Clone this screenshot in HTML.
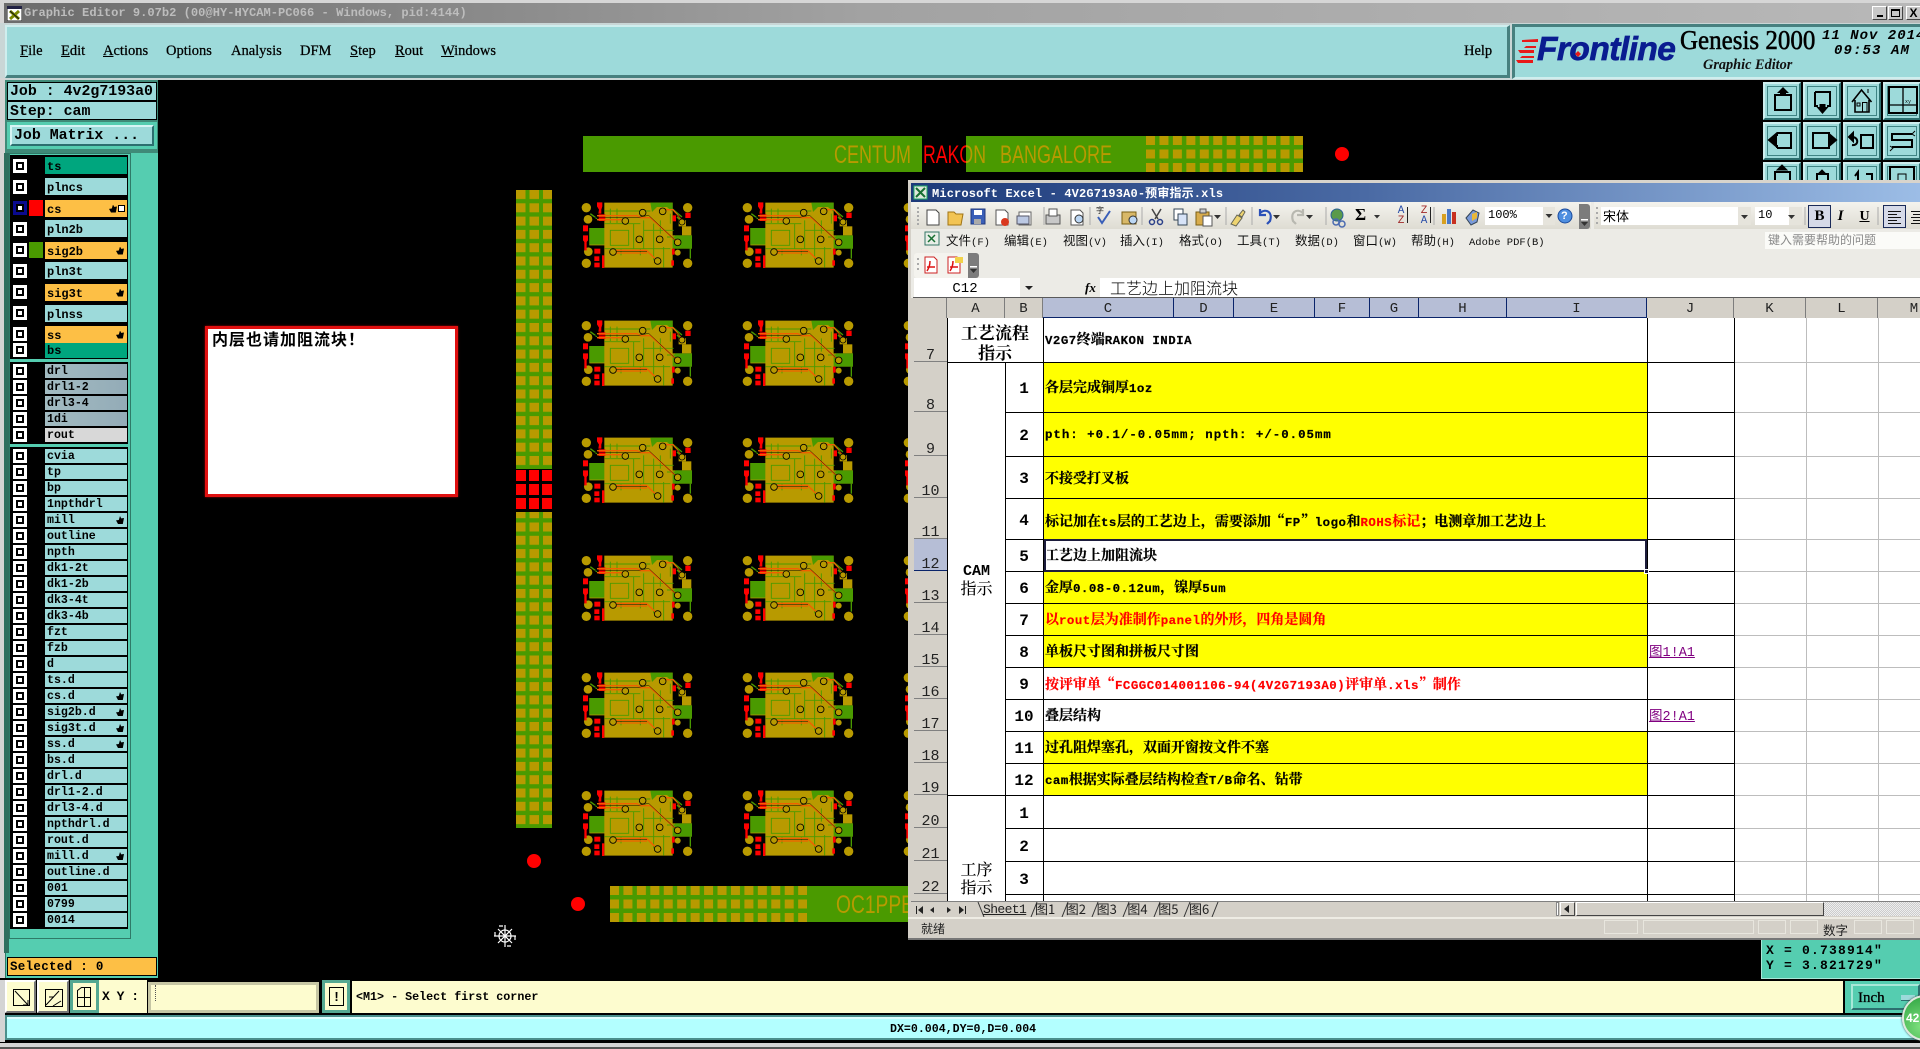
<!DOCTYPE html>
<html lang="zh">
<head>
<meta charset="utf-8">
<title>Graphic Editor</title>
<style>
html,body{margin:0;padding:0;background:#000;width:1920px;height:1049px;overflow:hidden}
div,span{box-sizing:border-box}
.a{position:absolute;white-space:nowrap}
body{font-family:"Liberation Mono","Noto Serif CJK SC",monospace;color:#000}
.mn{top:42px;font:14.5px/18px "Liberation Serif",serif;-webkit-text-stroke:.25px #000}
.r{position:absolute;left:45px;width:82px;font:bold 11.6px/16px "Liberation Mono",monospace;padding-left:2px;background:#9ddada;height:14px}
.g1{height:17px;line-height:20px;font-size:12px}
.o{background:#fdbf45}.t{background:#00a67e}.y{background:linear-gradient(90deg,#a3bcc2,#93abb7)}.w{background:#d8d8d8}
.c{position:absolute;left:13px;width:14px;height:14px;background:#fff}
.c::after{content:"";position:absolute;left:3px;top:3px;width:8px;height:8px;border:2px solid #000;background:#fff;box-sizing:border-box}
.h{position:absolute;right:3px;top:50%;margin-top:-4px;width:8px;height:8px;background:#000;clip-path:polygon(50% 0,65% 30%,100% 25%,85% 100%,25% 100%,0 55%,35% 50%)}
.ch{top:298px;height:20px;border-right:1px solid #7d7d7d;text-align:center;font:14px/23px "Liberation Mono",monospace;background:#d4d0c8;color:#222;overflow:hidden}
.cs{background:#b6bed6;border-right:1px solid #0a246a;border-bottom:1px solid #0a246a}
.rh{left:914px;width:33px;background:#d4d0c8;border-bottom:1px solid #808080;font:15px/10px "Liberation Mono",monospace;text-align:center;display:flex;align-items:flex-end;justify-content:center;color:#222}
.yl{left:1044px;width:603px;background:#ff0}
.tx{left:1045px;font:bold 14px/18px "Liberation Mono","Noto Serif CJK SC",monospace;color:#000;-webkit-text-stroke:.2px currentColor}
.tx i{font-style:normal;font-size:12.4px;letter-spacing:.5px}
.tx b{font-family:"Noto Serif CJK SC",serif;font-weight:bold}
.red{color:#f00}
.n{left:1005px;width:38px;text-align:center;font:bold 16px/18px "Liberation Mono",monospace}
.me{top:232px;font:12.5px/16px "Noto Sans CJK SC","Liberation Mono",sans-serif;color:#111}
.me i{font-style:normal;font-family:"Liberation Mono",monospace;font-size:10.5px}
.lnk{left:1649px;color:#800080;font:13.5px/16px "Liberation Mono","Noto Sans CJK SC",monospace;text-decoration:underline}
.btn{width:40px;height:40px;background:#9ddada;border:3px solid;border-color:#cdeeee #2c6f6f #2c6f6f #cdeeee;outline:1px solid #000;outline-offset:-1px}
.btn::after{content:"";position:absolute;left:2px;top:2px;right:2px;bottom:2px;border:1px solid #3f8484}
</style>
</head>
<body>

<!-- Title -->
<div class="a" style="left:0;top:0;width:1920px;height:25px;background:#d6d6d6"></div>
<div class="a" style="left:4px;top:3px;width:1916px;height:20px;background:linear-gradient(90deg,#6c6c6c,#a2a2a2 45%,#b8b8b8)"></div>
<svg class="a" style="left:7px;top:6px" width="15" height="15" viewBox="0 0 15 15"><rect width="15" height="15" fill="#fff" stroke="#222"/><rect width="15" height="3" fill="#224"/><path d="M3 5l9 8M12 5l-9 8" stroke="#7a8a00" stroke-width="3"/><path d="M3 5l9 8" stroke="#111" stroke-width="1"/></svg>
<div class="a" style="left:24px;top:6px;font:bold 12.1px/15px 'Liberation Mono',monospace;color:#bdbdbd">Graphic Editor 9.07b2 (00@HY-HYCAM-PC066 - Windows, pid:4144)</div>
<div class="a" style="left:1872px;top:6px;width:15px;height:14px;background:#c8c8c8;border:1px solid;border-color:#fff #444 #444 #fff"><div class="a" style="left:4px;top:8px;width:6px;height:2px;background:#000"></div></div>
<div class="a" style="left:1888px;top:6px;width:15px;height:14px;background:#c8c8c8;border:1px solid;border-color:#fff #444 #444 #fff"><div class="a" style="left:2px;top:2px;width:9px;height:8px;border:1px solid #000;border-top-width:2px"></div></div>
<div class="a" style="left:1906px;top:6px;width:15px;height:14px;background:#c8c8c8;border:1px solid;border-color:#fff #444 #444 #fff;font:bold 12px/12px 'Liberation Sans',sans-serif;text-align:center">X</div>

<!-- Menu -->
<div class="a" style="left:0;top:23px;width:1920px;height:57px;background:#c9d6d6"></div>
<div class="a" style="left:5px;top:25px;width:1505px;height:53px;background:#9ddada;border-bottom:3px solid #47807f;border-right:3px solid #47807f;border-top:2px solid #cfeeee;border-left:2px solid #cfeeee"></div>
<div class="a mn" style="left:20px"><u>F</u>ile</div>
<div class="a mn" style="left:61px"><u>E</u>dit</div>
<div class="a mn" style="left:103px"><u>A</u>ctions</div>
<div class="a mn" style="left:166px">Options</div>
<div class="a mn" style="left:231px">Analysis</div>
<div class="a mn" style="left:300px">DFM</div>
<div class="a mn" style="left:350px"><u>S</u>tep</div>
<div class="a mn" style="left:395px"><u>R</u>out</div>
<div class="a mn" style="left:441px"><u>W</u>indows</div>
<div class="a mn" style="left:1464px">Help</div>

<div class="a" style="left:1512px;top:24px;width:408px;height:55px;background:#9ddada;border-top:3px solid #47807f;border-left:3px solid #47807f;border-bottom:2px solid #cfeeee"></div>
<svg class="a" style="left:1516px;top:38px" width="24" height="26" viewBox="0 0 24 26"><path d="M6 2L22 1V4L6 4zM10 8H20V10H8zM2 12L18 12V15H4zM6 18H18V20H4zM0 22H17V25H2z" fill="#e81818"/></svg>
<div class="a" style="left:1537px;top:31px;font:italic bold 33.500px/38px 'Liberation Sans',sans-serif;color:#0a1c90;letter-spacing:-.55px;-webkit-text-stroke:.7px #0a1c90">Frontline</div>
<svg class="a" style="left:1568px;top:44px" width="20" height="20" viewBox="0 0 20 20"><path d="M10 7l3 3-3 3-3-3z" fill="#e81818"/></svg>
<div class="a" style="left:1680px;top:25px;font:25px/30px 'Liberation Serif',serif;color:#000;-webkit-text-stroke:.5px #000;transform:scaleY(1.1);transform-origin:top left">Genesis 2000</div>
<div class="a" style="left:1703px;top:57px;font:italic bold 14.300px/17px 'Liberation Serif',serif;color:#111">Graphic Editor</div>
<div class="a" style="left:1822px;top:28px;font:italic bold 14px/16px 'Liberation Mono',monospace;letter-spacing:1px">11 Nov 2014</div>
<div class="a" style="left:1834px;top:43px;font:italic bold 14px/16px 'Liberation Mono',monospace;letter-spacing:1.1px">09:53 AM</div>

<!-- Left panel -->
<div class="a" style="left:0;top:78px;width:5px;height:960px;background:#d4d4d4"></div>
<div class="a" style="left:5px;top:80px;width:153px;height:898px;background:#55cdb0;border-left:1px solid #2f7a68"></div>
<div class="a" style="left:5px;top:80px;width:153px;height:73px;background:#3f8a78"></div>
<div class="a" style="left:4px;top:153px;width:5px;height:800px;background:#2f6f5f"></div>
<div class="a" style="left:7px;top:82px;width:150px;height:19px;background:#9ddada;border:1px solid #000;font:bold 14.9px/19px 'Liberation Mono',monospace;padding-left:2px">Job : 4v2g7193a0</div>
<div class="a" style="left:7px;top:101px;width:150px;height:19px;background:#9ddada;border:1px solid #000;font:bold 14.9px/20px 'Liberation Mono',monospace;padding-left:2px">Step: cam</div>
<div class="a" style="left:7px;top:122px;width:150px;height:27px;background:#55cdb0"></div>
<div class="a" style="left:10px;top:125px;width:144px;height:21px;background:#9ddada;border:2px solid;border-color:#d6f5f5 #2c6f6f #2c6f6f #d6f5f5;font:bold 14.9px/19px 'Liberation Mono',monospace;padding-left:2px">Job Matrix ...</div>

<div class="a" style="left:9px;top:153px;width:122px;height:786px;background:#55cdb0;border:1px solid #2f7a68"></div>
<div class="a" style="left:10px;top:155px;width:118px;height:204px;background:#000"></div>
<div class="a" style="left:10px;top:362px;width:118px;height:82px;background:#000"></div>
<div class="a" style="left:10px;top:447px;width:118px;height:482px;background:#000"></div>

<!-- group 1 -->
<div class="c" style="top:159px"></div><div class="r g1 t" style="top:157px">ts</div>
<div class="c" style="top:180px"></div><div class="r g1" style="top:178px">plncs</div>
<div class="c" style="top:201px;background:#0a0a90"></div><div class="a" style="left:29px;top:200px;width:14px;height:16px;background:#f00"></div><div class="r g1 o" style="top:200px">cs<span class="h" style="right:10px"></span><span class="a" style="right:2px;top:5px;width:7px;height:7px;border:1px solid #000;background:#fff"></span></div>
<div class="c" style="top:222px"></div><div class="r g1" style="top:220px">pln2b</div>
<div class="c" style="top:243px"></div><div class="a" style="left:29px;top:242px;width:14px;height:16px;background:#4a9a00"></div><div class="r g1 o" style="top:242px">sig2b<span class="h"></span></div>
<div class="c" style="top:264px"></div><div class="r g1" style="top:262px">pln3t</div>
<div class="c" style="top:285px"></div><div class="r g1 o" style="top:284px">sig3t<span class="h"></span></div>
<div class="c" style="top:306px"></div><div class="r g1" style="top:305px">plnss</div>
<div class="c" style="top:327px"></div><div class="r g1 o" style="top:326px">ss<span class="h"></span></div>
<div class="c" style="top:343px"></div><div class="r g1 t" style="top:343px;height:15px;line-height:16px">bs</div>

<!-- group 2 -->
<div class="c" style="top:364px"></div><div class="r y" style="top:364px">drl</div>
<div class="c" style="top:380px"></div><div class="r y" style="top:380px">drl1-2</div>
<div class="c" style="top:396px"></div><div class="r y" style="top:396px">drl3-4</div>
<div class="c" style="top:412px"></div><div class="r y" style="top:412px">1di</div>
<div class="c" style="top:428px"></div><div class="r w" style="top:428px">rout</div>

<!-- group 3 -->
<div class="c" style="top:449px"></div><div class="r" style="top:449px">cvia</div>
<div class="c" style="top:465px"></div><div class="r" style="top:465px">tp</div>
<div class="c" style="top:481px"></div><div class="r" style="top:481px">bp</div>
<div class="c" style="top:497px"></div><div class="r" style="top:497px">1npthdrl</div>
<div class="c" style="top:513px"></div><div class="r" style="top:513px">mill<span class="h"></span></div>
<div class="c" style="top:529px"></div><div class="r" style="top:529px">outline</div>
<div class="c" style="top:545px"></div><div class="r" style="top:545px">npth</div>
<div class="c" style="top:561px"></div><div class="r" style="top:561px">dk1-2t</div>
<div class="c" style="top:577px"></div><div class="r" style="top:577px">dk1-2b</div>
<div class="c" style="top:593px"></div><div class="r" style="top:593px">dk3-4t</div>
<div class="c" style="top:609px"></div><div class="r" style="top:609px">dk3-4b</div>
<div class="c" style="top:625px"></div><div class="r" style="top:625px">fzt</div>
<div class="c" style="top:641px"></div><div class="r" style="top:641px">fzb</div>
<div class="c" style="top:657px"></div><div class="r" style="top:657px">d</div>
<div class="c" style="top:673px"></div><div class="r" style="top:673px">ts.d</div>
<div class="c" style="top:689px"></div><div class="r" style="top:689px">cs.d<span class="h"></span></div>
<div class="c" style="top:705px"></div><div class="r" style="top:705px">sig2b.d<span class="h"></span></div>
<div class="c" style="top:721px"></div><div class="r" style="top:721px">sig3t.d<span class="h"></span></div>
<div class="c" style="top:737px"></div><div class="r" style="top:737px">ss.d<span class="h"></span></div>
<div class="c" style="top:753px"></div><div class="r" style="top:753px">bs.d</div>
<div class="c" style="top:769px"></div><div class="r" style="top:769px">drl.d</div>
<div class="c" style="top:785px"></div><div class="r" style="top:785px">drl1-2.d</div>
<div class="c" style="top:801px"></div><div class="r" style="top:801px">drl3-4.d</div>
<div class="c" style="top:817px"></div><div class="r" style="top:817px">npthdrl.d</div>
<div class="c" style="top:833px"></div><div class="r" style="top:833px">rout.d</div>
<div class="c" style="top:849px"></div><div class="r" style="top:849px">mill.d<span class="h"></span></div>
<div class="c" style="top:865px"></div><div class="r" style="top:865px">outline.d</div>
<div class="c" style="top:881px"></div><div class="r" style="top:881px">001</div>
<div class="c" style="top:897px"></div><div class="r" style="top:897px">0799</div>
<div class="c" style="top:913px"></div><div class="r" style="top:913px">0014</div>

<div class="a" style="left:7px;top:957px;width:150px;height:19px;background:#fdbf45;border:1px solid #000;font:bold 12.500px/19px 'Liberation Mono',monospace;padding-left:2px;letter-spacing:.3px">Selected : 0</div>

<!-- Canvas -->
<svg class="a" style="left:0;top:0" width="1920" height="1049" viewBox="0 0 1920 1049">
<defs>
<pattern id="pv" patternUnits="userSpaceOnUse" x="516" y="190" width="13.5" height="13.3"><rect width="13.5" height="13.3" fill="#4a9a00"/><rect width="9.5" height="9" fill="#b89a00"/></pattern>
<pattern id="pt" patternUnits="userSpaceOnUse" x="1146" y="136" width="13.45" height="13.5"><rect width="13.45" height="13.5" fill="#4a9a00"/><rect width="9" height="9" fill="#b89a00"/></pattern>
<pattern id="pb" patternUnits="userSpaceOnUse" x="610" y="886" width="13.44" height="13.5"><rect width="13.44" height="13.5" fill="#4a9a00"/><rect width="9" height="9" fill="#b89a00"/></pattern>
<clipPath id="cr"><rect x="920" y="136" width="46" height="36"/></clipPath>
<clipPath id="cg"><rect x="966" y="136" width="30" height="36"/></clipPath>
<g id="pcb" transform="scale(.3333) translate(-245,-65)">
 <path d="M312 67H517V165H575V205H517V262H312V195H267V143H312Z" fill="#b89a00"/>
 <path d="M525 165H575V205H517V175ZM267 143H312V193H267ZM450 67H517V95L500 80H470L455 95Z" fill="#4a9a00"/>
 <path d="M312 92H450M330 85V128M350 85V128M312 130H420M400 130V205M312 205H510M330 150V195H385V150ZM430 120V205M460 130V240M490 200V262M430 150H520M480 120V160M510 100V130M362 205V225M420 205V225M500 170H540" fill="none" stroke="#4a9a00" stroke-width="2.800"/>
 <path d="M270 100L290 115M530 110L545 125M515 85L545 110M570 205V235" stroke="#4a9a00" stroke-width="4" fill="none"/>
 <circle cx="258" cy="82" r="14" fill="#b89a00"/><circle cx="263" cy="117" r="13" fill="#b89a00"/><circle cx="562" cy="82" r="14" fill="#b89a00"/><circle cx="264" cy="214" r="13" fill="#b89a00"/><circle cx="258" cy="249" r="14" fill="#b89a00"/><circle cx="562" cy="249" r="14" fill="#b89a00"/><circle cx="532" cy="217" r="9" fill="#b89a00"/><rect x="535" y="120" width="22" height="18" fill="#b89a00"/><rect x="545" y="138" width="28" height="27" fill="#b89a00"/>
 <g fill="#f00"><path d="M290 66h16v12l-3 10v12h-9l2-12-6-10z"/><rect x="555" y="97" width="16" height="16"/><rect x="248" y="135" width="15" height="18"/><path d="M248 165h15v15l-4 5v25h-7v-25l-4-5z"/><rect x="282" y="205" width="18" height="15"/><rect x="282" y="228" width="15" height="14"/><rect x="282" y="247" width="16" height="14"/><rect x="305" y="225" width="7" height="38"/><rect x="295" y="102" width="20" height="20"/><rect x="515" y="205" width="8" height="18"/><rect x="513" y="240" width="8" height="16"/><rect x="517" y="105" width="10" height="18"/></g>
 <path d="M290 106H410L420 112H450L532 186M290 118H378M345 210H438L470 240M338 218H440M490 88H518L546 122" fill="none" stroke="#f06000" stroke-width="4"/>
 <path d="M280 112H410L445 105L530 185M520 95L548 120M340 214H440" fill="none" stroke="#000" stroke-width="1.4"/>
 <g fill="#b89a00" stroke="#000" stroke-width="2.5"><circle cx="427" cy="97" r="10"/><circle cx="375" cy="122" r="10"/><circle cx="487" cy="93" r="10"/><circle cx="545" cy="125" r="9"/><circle cx="532" cy="186" r="10"/><circle cx="417" cy="177" r="10"/><circle cx="478" cy="177" r="10"/><circle cx="338" cy="215" r="10"/><circle cx="472" cy="242" r="10"/></g>
</g>
</defs>
<rect x="583" y="136" width="339" height="36" fill="#4a9a00"/>
<rect x="966" y="136" width="180" height="36" fill="#4a9a00"/>
<rect x="1146" y="136" width="157" height="36" fill="url(#pt)"/>
<text x="834" y="163" font-family="Liberation Sans" font-size="25" fill="#b89a00" textLength="77" lengthAdjust="spacingAndGlyphs">CENTUM</text>
<text x="923" y="163" font-family="Liberation Sans" font-size="25" fill="#f00" textLength="63" lengthAdjust="spacingAndGlyphs" clip-path="url(#cr)">RAKON</text>
<text x="923" y="163" font-family="Liberation Sans" font-size="25" fill="#b89a00" textLength="63" lengthAdjust="spacingAndGlyphs" clip-path="url(#cg)">RAKON</text>
<text x="1000" y="163" font-family="Liberation Sans" font-size="25" fill="#b89a00" textLength="112" lengthAdjust="spacingAndGlyphs">BANGALORE</text>
<circle cx="1342" cy="154" r="7" fill="#f00"/>
<rect x="516" y="190" width="36" height="279" fill="url(#pv)"/>
<rect x="516" y="512" width="36" height="316" fill="url(#pv)"/>
<g fill="#f00"><rect x="516" y="470" width="10" height="11"/><rect x="529" y="470" width="10" height="11"/><rect x="542" y="470" width="10" height="11"/><rect x="516" y="484" width="10" height="11"/><rect x="529" y="484" width="10" height="11"/><rect x="542" y="484" width="10" height="11"/><rect x="516" y="498" width="10" height="11"/><rect x="529" y="498" width="10" height="11"/><rect x="542" y="498" width="10" height="11"/></g>
<use href="#pcb" x="582" y="202"/><use href="#pcb" x="743" y="202"/><use href="#pcb" x="904" y="202"/>
<use href="#pcb" x="582" y="320"/><use href="#pcb" x="743" y="320"/><use href="#pcb" x="904" y="320"/>
<use href="#pcb" x="582" y="437"/><use href="#pcb" x="743" y="437"/><use href="#pcb" x="904" y="437"/>
<use href="#pcb" x="582" y="555"/><use href="#pcb" x="743" y="555"/><use href="#pcb" x="904" y="555"/>
<use href="#pcb" x="582" y="672"/><use href="#pcb" x="743" y="672"/><use href="#pcb" x="904" y="672"/>
<use href="#pcb" x="582" y="790"/><use href="#pcb" x="743" y="790"/><use href="#pcb" x="904" y="790"/>
<circle cx="534" cy="861" r="7" fill="#f00"/><circle cx="578" cy="904" r="7" fill="#f00"/>
<rect x="610" y="886" width="300" height="36" fill="#4a9a00"/>
<rect x="610" y="886" width="197" height="36" fill="url(#pb)"/>
<text x="836" y="913" font-family="Liberation Sans" font-size="25" fill="#b89a00" textLength="78" lengthAdjust="spacingAndGlyphs">OC1PPB</text>
<g stroke="#fff" stroke-width="1.2" fill="none"><path d="M505 925V947M494 936H516M498 929L512 943M512 929L498 943"/><circle cx="505" cy="936" r="6"/><path d="M499 926h4M507 946h4M495 932v4M515 936v4" /></g>
</svg>

<!-- Note -->
<div class="a" style="left:205px;top:326px;width:253px;height:171px;background:#fff;border:3px solid #e01010;box-shadow:0 0 2px #a00"></div>
<div class="a" style="left:212px;top:328px;font:bold 16px/20px 'Noto Sans CJK SC','Liberation Sans',sans-serif;color:#000;letter-spacing:1px">内层也请加阻流块！</div>

<!-- Right toolbar -->
<div class="a btn" style="left:1762px;top:81px"></div><div class="a btn" style="left:1802px;top:81px"></div><div class="a btn" style="left:1842px;top:81px"></div><div class="a btn" style="left:1882px;top:81px"></div>
<div class="a btn" style="left:1762px;top:121px"></div><div class="a btn" style="left:1802px;top:121px"></div><div class="a btn" style="left:1842px;top:121px"></div><div class="a btn" style="left:1882px;top:121px"></div>
<div class="a btn" style="left:1762px;top:161px"></div><div class="a btn" style="left:1802px;top:161px"></div><div class="a btn" style="left:1842px;top:161px"></div><div class="a btn" style="left:1882px;top:161px"></div>
<svg class="a" style="left:0;top:0" width="1920" height="180" viewBox="0 0 1920 180" fill="none" stroke="#000" stroke-width="2">
<path d="M1775 95h16v15h-16z"/><path d="M1783 87l-6 6h3v3h6v-3h3z" fill="#000" stroke="none"/>
<path d="M1815 92h15v14h-3M1818 106h-3V92"/><path d="M1822.500 114l-6-7h3v-3h6v3h3z" fill="#000" stroke="none"/>
<path d="M1852 102l9.500-12 10 12M1855 100v12h14v-12" stroke-width="1.600"/><rect x="1857" y="103" width="3" height="3" stroke-width="1"/><rect x="1862.500" y="102.500" width="4.500" height="9.500" stroke-width="1"/><path d="M1868 93v-4" stroke-width="1"/>
<rect x="1889" y="87" width="28" height="26" stroke-width="2"/><path d="M1889 105h28M1903 87v26" stroke-width="1.300"/>
<text x="1905" y="103" font-size="5" font-family="Liberation Mono" fill="#000" stroke="none">xy</text>
<path d="M1777 133h14v15h-14M1777 133v3M1777 148v-3"/><path d="M1769 140l7-6v12z" fill="#000"/>
<path d="M1813 133h16v15h-16z"/><path d="M1836 140l-7-6v12z" fill="#000"/>
<path d="M1852 145c7 1 7-8 0-8"/><path d="M1849 137l4-4v8z" fill="#000"/><rect x="1861" y="135" width="12" height="13"/>
<path d="M1912 134h-20v6h20v7h-20" stroke-width="2"/><path d="M1915 131l-3 3 3 2M1890 146l3 2-3 3" stroke-width="1"/>
<rect x="1775" y="172" width="15" height="10"/><path d="M1782 165l-5 5h10z" fill="#000" stroke-width="1"/>
<rect x="1817" y="174" width="11" height="8"/><path d="M1822 170l-4 4h8z" fill="#000" stroke-width="1"/>
<path d="M1855 176l3-4v10M1866 174h6v8"/>
<rect x="1890" y="167" width="24" height="16"/><rect x="1898" y="174" width="8" height="8" stroke-width="1"/>
</svg>

<!-- Excel -->
<div class="a" style="left:908px;top:180px;width:1012px;height:760px;background:#d4d0c8;overflow:hidden">
</div>
<div class="a" style="left:908px;top:180px;width:1012px;height:3px;background:#d8d4cc"></div>
<div class="a" style="left:911px;top:183px;width:1009px;height:19px;background:linear-gradient(90deg,#1d3a7a,#4a6aa4 45%,#9cbde6)"></div>
<svg class="a" style="left:913px;top:185px" width="15" height="15" viewBox="0 0 15 15"><rect x="1" y="1" width="13" height="13" fill="#dfe8dd" stroke="#2a6"/><path d="M3 3l9 9M12 3l-9 9" stroke="#176f32" stroke-width="2"/></svg>
<div class="a" style="left:932px;top:185px;font:bold 12px/19px 'Liberation Mono','Noto Sans CJK SC',monospace;color:#fff;letter-spacing:.15px">Microsoft Excel - 4V2G7193A0-预审指示.xls</div>

<div class="a" style="left:911px;top:202px;width:1009px;height:76px;background:#ecebe6"></div>
<div class="a" style="left:911px;top:202px;width:680px;height:27px;background:linear-gradient(#f4f3ee,#dedcd3)"></div>
<div class="a" style="left:1594px;top:202px;width:326px;height:27px;background:linear-gradient(#f4f3ee,#dedcd3)"></div>
<div class="a" style="left:1579px;top:204px;width:11px;height:25px;background:#7c7c7c;border-radius:0 3px 3px 0"></div>
<div class="a" style="left:914px;top:253px;width:60px;height:25px;background:#f4f3ee;border-radius:3px 0 0 3px"></div>
<div class="a" style="left:968px;top:253px;width:11px;height:25px;background:#7c7c7c;border-radius:0 3px 3px 0"></div>

<!-- toolbar icons -->
<svg class="a" style="left:911px;top:202px" width="1009" height="76" viewBox="911 202 1009 76">
<g stroke-width="1">
<path d="M927 210h9l3 3v12h-12z" fill="#fff" stroke="#444"/>
<path d="M948 212h6l2 2h7l-2 11h-13z" fill="#f2c453" stroke="#a07414"/>
<rect x="971" y="209" width="14" height="15" fill="#3a5fb8" stroke="#223a7c"/><rect x="974" y="210" width="8" height="5" fill="#fff"/><rect x="974" y="219" width="7" height="5" fill="#aaa"/>
<path d="M996 210h9l3 3v12h-12z" fill="#fff" stroke="#555"/><circle cx="1005" cy="222" r="4" fill="#d9381e"/>
<rect x="1019" y="212" width="12" height="13" fill="#fff" stroke="#666"/><rect x="1017" y="216" width="12" height="8" fill="#bcc9e4" stroke="#556"/>
<rect x="1046" y="215" width="14" height="9" fill="#c8c8c8" stroke="#555"/><rect x="1049" y="209" width="8" height="7" fill="#fff" stroke="#555"/>
<path d="M1071 210h9l3 3v12h-12z" fill="#fff" stroke="#555"/><circle cx="1079" cy="219" r="4" fill="#bcd7f4" stroke="#333"/>
<path d="M1098 217l4 6 8-12" fill="none" stroke="#3a5fb8" stroke-width="2"/><text x="1096" y="213" font-size="8" fill="#222" font-family="Noto Sans CJK SC">字</text>
<rect x="1122" y="212" width="14" height="12" fill="#d8b868" stroke="#7a5f14"/><circle cx="1133" cy="220" r="4" fill="#bcd7f4" stroke="#333"/>
<path d="M1152 209l6 10M1161 209l-6 10" stroke="#444" stroke-width="1.5"/><circle cx="1152" cy="222" r="2.500" fill="none" stroke="#2a3f88" stroke-width="1.500"/><circle cx="1160" cy="222" r="2.500" fill="none" stroke="#2a3f88" stroke-width="1.500"/>
<rect x="1174" y="209" width="9" height="11" fill="#fff" stroke="#345"/><rect x="1178" y="214" width="9" height="11" fill="#d7e3f7" stroke="#345"/>
<rect x="1196" y="212" width="13" height="13" fill="#d8ac4c" stroke="#7a5f14"/><rect x="1200" y="209" width="6" height="4" fill="#ccc" stroke="#555"/><rect x="1203" y="216" width="9" height="10" fill="#fff" stroke="#555"/>
<path d="M1231 224l6-9 5 3-6 8zM1239 215l4-5 2 2-3 5z" fill="#eed470" stroke="#665"/>
<path d="M1260 213c6-5 13-1 10 8l-3 3M1260 209v6h6" fill="none" stroke="#2a50b8" stroke-width="2.2"/>
<path d="M1303 213c-6-5-13-1-10 8l3 3M1303 209v6h-6" fill="none" stroke="#b8b8b0" stroke-width="2.2"/>
<circle cx="1337" cy="215" r="6" fill="#5a9a4a" stroke="#2a6098"/><circle cx="1336" cy="222" r="3" fill="none" stroke="#4a6ab0" stroke-width="1.500"/><circle cx="1342" cy="224" r="3" fill="none" stroke="#4a6ab0" stroke-width="1.500"/>
<rect x="1442" y="214" width="4" height="10" fill="#d8a020"/><rect x="1447" y="209" width="4" height="15" fill="#4878c8"/><rect x="1452" y="212" width="4" height="12" fill="#c83020"/>
<path d="M1466 218l7-8 6 3-2 9-6 3z" fill="#7a9ad8" stroke="#345"/><path d="M1472 214l5-2v6l-5 3z" fill="#e8b838"/>
<circle cx="1565" cy="216" r="7" fill="#4f8fe0" stroke="#1a4a9c"/>
</g>
<g fill="#333"><path d="M1273 215h7l-3.500 4zM1306 215h7l-3.500 4z"/><path d="M1214 215h7l-3.500 4zM1374 215h6l-3 3.500zM1548 214h7l-3.500 4zM1581 222h7l-3.500 4zM970 269h7l-3.500 4z"/></g>
<rect x="1581" y="219" width="7" height="1.500" fill="#fff"/><rect x="970" y="266" width="7" height="1.500" fill="#fff"/>
<g fill="#aaa"><rect x="917" y="207" width="2" height="2"/><rect x="917" y="211" width="2" height="2"/><rect x="917" y="215" width="2" height="2"/><rect x="917" y="219" width="2" height="2"/><rect x="917" y="223" width="2" height="2"/><rect x="917" y="258" width="2" height="2"/><rect x="917" y="263" width="2" height="2"/><rect x="917" y="268" width="2" height="2"/><rect x="1596" y="207" width="2" height="2"/><rect x="1596" y="212" width="2" height="2"/><rect x="1596" y="217" width="2" height="2"/><rect x="1596" y="222" width="2" height="2"/></g>
<g stroke="#aaa" stroke-width="1"><path d="M1044 207v18M1090 207v18M1142 207v18M1226 207v18M1252 207v18M1326 207v18M1434 207v18M1805 207v18M1878 207v18"/></g>
<rect x="925" y="232" width="14" height="13" fill="#e8eee8" stroke="#376"/><path d="M928 235l7 7M935 235l-7 7" stroke="#176f32" stroke-width="1.500"/>
<path d="M925 257h9l3 3v13h-12z" fill="#fff" stroke="#c22"/><path d="M927 271c2-3 3-6 3-10m-3 6h8" stroke="#d11" fill="none" stroke-width="1.500"/>
<path d="M948 257h9l3 3v13h-12z" fill="#fff" stroke="#c22"/><path d="M950 271c2-3 3-6 3-10m-3 6h8" stroke="#d11" fill="none" stroke-width="1.500"/><rect x="955" y="257" width="8" height="6" fill="#f2d24a"/>
</svg>
<div class="a" style="left:1397px;top:206px;font:11px/10px 'Liberation Mono',monospace;color:#2a4ea8;width:8px;text-align:center">A</div><div class="a" style="left:1397px;top:216px;font:11px/10px 'Liberation Mono',monospace;color:#a02a2a;width:8px;text-align:center">Z</div>
<div class="a" style="left:1420px;top:206px;font:11px/10px 'Liberation Mono',monospace;color:#a02a2a;width:8px;text-align:center">Z</div><div class="a" style="left:1420px;top:216px;font:11px/10px 'Liberation Mono',monospace;color:#2a4ea8;width:8px;text-align:center">A</div>
<div class="a" style="left:1407px;top:207px;width:1px;height:16px;background:#222"></div><div class="a" style="left:1430px;top:207px;width:1px;height:16px;background:#222"></div>
<div class="a" style="left:1355px;top:205px;font:bold 17px/20px 'Liberation Serif',serif">Σ</div>
<div class="a" style="left:1561px;top:209px;font:bold 11px/14px 'Liberation Sans',sans-serif;color:#fff">?</div>
<div class="a" style="left:1485px;top:207px;width:66px;height:18px;background:#fff;font:12px/16px 'Liberation Mono',monospace;padding-left:3px">100%</div>
<div class="a" style="left:1543px;top:207px;width:12px;height:18px;background:#e6e4dc"></div>
<div class="a" style="left:1601px;top:207px;width:150px;height:18px;background:#fff;font:13px/17px 'Noto Sans CJK SC',sans-serif;padding-left:2px">宋体</div>
<div class="a" style="left:1738px;top:207px;width:13px;height:18px;background:#e6e4dc"></div>
<div class="a" style="left:1755px;top:207px;width:47px;height:18px;background:#fff;font:12px/17px 'Liberation Mono',monospace;padding-left:3px">10</div>
<div class="a" style="left:1789px;top:207px;width:13px;height:18px;background:#e6e4dc"></div>
<svg class="a" style="left:1738px;top:207px" width="70" height="18"><path d="M3 8h7l-3.500 4zM50 8h7l-3.500 4z" fill="#333"/></svg>
<svg class="a" style="left:1543px;top:207px" width="12" height="18"><path d="M2.500 7h7l-3.500 4z" fill="#333"/></svg>
<div class="a" style="left:1808px;top:205px;width:23px;height:23px;background:#d6dae8;border:1px solid #1a2a58;font:bold 15px/21px 'Liberation Serif',serif;text-align:center">B</div>
<div class="a" style="left:1829px;top:205px;width:23px;height:23px;font:italic bold 15px/23px 'Liberation Serif',serif;text-align:center">I</div>
<div class="a" style="left:1853px;top:205px;width:23px;height:23px;font:bold 14px/23px 'Liberation Serif',serif;text-align:center;text-decoration:underline">U</div>
<div class="a" style="left:1883px;top:205px;width:23px;height:23px;background:#d6dae8;border:1px solid #1a2a58"></div>
<svg class="a" style="left:1883px;top:205px" width="37" height="23" fill="none" stroke="#111"><path d="M5 6.500h13M5 9.500h9M5 12.500h13M5 15.500h9M5 18.500h13"/><path d="M28 6.500h9M30 9.500h7M28 12.500h9M30 15.500h7M28 18.500h9"/></svg>

<div class="a me" style="left:946px">文件<i>(F)</i></div>
<div class="a me" style="left:1004px">编辑<i>(E)</i></div>
<div class="a me" style="left:1063px">视图<i>(V)</i></div>
<div class="a me" style="left:1120px">插入<i>(I)</i></div>
<div class="a me" style="left:1179px">格式<i>(O)</i></div>
<div class="a me" style="left:1237px">工具<i>(T)</i></div>
<div class="a me" style="left:1295px">数据<i>(D)</i></div>
<div class="a me" style="left:1353px">窗口<i>(W)</i></div>
<div class="a me" style="left:1411px">帮助<i>(H)</i></div>
<div class="a me" style="left:1469px"><i>Adobe PDF(B)</i></div>
<div class="a" style="left:1765px;top:232px;width:155px;height:17px;background:#fbfbf8;font:12px/16px 'Noto Sans CJK SC',sans-serif;color:#8a8a8a;padding-left:3px">键入需要帮助的问题</div>

<!-- formula bar -->
<div class="a" style="left:911px;top:278px;width:1009px;height:20px;background:#ecebe6"></div>
<div class="a" style="left:914px;top:278px;width:106px;height:19px;background:#fff;font:14px/22px 'Liberation Mono',monospace;text-align:center;padding-right:4px">C12</div>
<svg class="a" style="left:1024px;top:284px" width="10" height="8"><path d="M1 2h8l-4 4z" fill="#222"/></svg>
<div class="a" style="left:1085px;top:280px;font:italic bold 13px/16px 'Liberation Serif',serif">fx</div>
<div class="a" style="left:1100px;top:278px;width:820px;height:19px;background:#fff;font:16px/19px 'Noto Sans CJK SC',sans-serif;padding-left:10px;font-weight:300">工艺边上加阻流块</div>
<div class="a" style="left:913px;top:297px;width:1007px;height:1px;background:#5a5a5a"></div>

<!-- grid -->
<div class="a" style="left:914px;top:298px;width:1006px;height:603px;background:#fff"></div>
<div class="a ch" style="left:914px;width:33px"></div>
<div class="a ch" style="left:947px;width:58px">A</div>
<div class="a ch" style="left:1005px;width:38px">B</div>
<div class="a ch cs" style="left:1043px;width:131px">C</div>
<div class="a ch cs" style="left:1174px;width:60px">D</div>
<div class="a ch cs" style="left:1234px;width:81px">E</div>
<div class="a ch cs" style="left:1315px;width:55px">F</div>
<div class="a ch cs" style="left:1370px;width:49px">G</div>
<div class="a ch cs" style="left:1419px;width:88px">H</div>
<div class="a ch cs" style="left:1507px;width:140px">I</div>
<div class="a ch" style="left:1647px;width:87px">J</div>
<div class="a ch" style="left:1734px;width:72px">K</div>
<div class="a ch" style="left:1806px;width:72px">L</div>
<div class="a ch" style="left:1878px;width:72px;border-right:0">M</div>

<div class="a rh" style="top:318px;height:44px">7</div>
<div class="a rh" style="top:362px;height:50px">8</div>
<div class="a rh" style="top:412px;height:44px">9</div>
<div class="a rh" style="top:456px;height:42px">10</div>
<div class="a rh" style="top:498px;height:41px">11</div>
<div class="a rh" style="top:539px;height:32px;background:#b6bed6;border-bottom:1px solid #0a246a">12</div>
<div class="a rh" style="top:571px;height:32px">13</div>
<div class="a rh" style="top:603px;height:32px">14</div>
<div class="a rh" style="top:635px;height:32px">15</div>
<div class="a rh" style="top:667px;height:32px">16</div>
<div class="a rh" style="top:699px;height:32px">17</div>
<div class="a rh" style="top:731px;height:32px">18</div>
<div class="a rh" style="top:763px;height:32px">19</div>
<div class="a rh" style="top:795px;height:33px">20</div>
<div class="a rh" style="top:828px;height:33px">21</div>
<div class="a rh" style="top:861px;height:33px">22</div>
<div class="a rh" style="top:894px;height:7px;border:0"></div>

<div class="a yl" style="top:362px;height:136px"></div>
<div class="a yl" style="top:498px;height:41px"></div>
<div class="a yl" style="top:571px;height:96px"></div>
<div class="a yl" style="top:731px;height:64px"></div>

<!-- grid lines -->
<svg class="a" style="left:0;top:0" width="1920" height="1049" viewBox="0 0 1920 1049" shape-rendering="crispEdges">
<g stroke="#bdbdbd"><path d="M1806.500 318V901M1878.500 318V901"/><path d="M1734 362.500H1920M1734 412.500H1920M1734 456.500H1920M1734 498.500H1920M1734 539.500H1920M1734 571.500H1920M1734 603.500H1920M1734 635.500H1920M1734 667.500H1920M1734 699.500H1920M1734 731.500H1920M1734 763.500H1920M1734 795.500H1920M1734 828.500H1920M1734 861.500H1920M1734 894.500H1920"/></g>
<g stroke="#000"><path d="M947 362.500H1734M1005 412.500H1734M1005 456.500H1734M1005 498.500H1734M1005 539.500H1734M1005 571.500H1734M1005 603.500H1734M1005 635.500H1734M1005 667.500H1734M1005 699.500H1734M1005 731.500H1734M1005 763.500H1734M947 795.500H1734M1005 828.500H1734M1005 861.500H1734M1005 894.500H1734"/><path d="M947.500 318V901M1005.500 362V901M1043.500 318V901M1647.500 318V901M1734.500 318V901"/></g>
</svg>

<!-- cells -->
<div class="a" style="left:947px;top:322px;width:96px;text-align:center;font:bold 17px/20px 'Noto Serif CJK SC',serif">工艺流程<br>指示</div>
<div class="a tx" style="top:332px"><i>V2G7</i>终端<i>RAKON INDIA</i></div>
<div class="a tx" style="top:380px">各层完成铜厚<i>1oz</i></div>
<div class="a tx" style="top:426px"><i style="letter-spacing:1px">pth: +0.1/-0.05mm; npth: +/-0.05mm</i></div>
<div class="a tx" style="top:471px">不接受打叉板</div>
<div class="a tx" style="top:512px">标记加在<i>ts</i>层的工艺边上，需要添加<b>“</b><i>FP</i><b>”</b><i>logo</i>和<span class="red"><i>ROHS</i>标记</span>；电测章加工艺边上</div>
<div class="a tx" style="top:548px">工艺边上加阻流块</div>
<div class="a tx" style="top:580px">金厚<i>0.08-0.12um</i>，镍厚<i>5um</i></div>
<div class="a tx red" style="top:612px">以<i>rout</i>层为准制作<i>panel</i>的外形，四角是圆角</div>
<div class="a tx" style="top:644px">单板尺寸图和拼板尺寸图</div>
<div class="a tx red" style="top:675px">按评审单<b>“</b><i>FCGGC014001106-94(4V2G7193A0)</i>评审单<i>.xls</i><b>”</b>制作</div>
<div class="a tx" style="top:708px">叠层结构</div>
<div class="a tx" style="top:740px">过孔阻焊塞孔，双面开窗按文件不塞</div>
<div class="a tx" style="top:772px"><i>cam</i>根据实际叠层结构检查<i>T/B</i>命名、钻带</div>

<div class="a n" style="top:380px">1</div><div class="a n" style="top:427px">2</div><div class="a n" style="top:470px">3</div><div class="a n" style="top:512px">4</div><div class="a n" style="top:548px">5</div><div class="a n" style="top:580px">6</div><div class="a n" style="top:612px">7</div><div class="a n" style="top:644px">8</div><div class="a n" style="top:676px">9</div><div class="a n" style="top:708px">10</div><div class="a n" style="top:740px">11</div><div class="a n" style="top:772px">12</div><div class="a n" style="top:805px">1</div><div class="a n" style="top:838px">2</div><div class="a n" style="top:871px">3</div>

<div class="a" style="left:948px;top:562px;width:57px;text-align:center;font:bold 15px/19px 'Liberation Mono','Noto Serif CJK SC',monospace">CAM<br><span style="font-size:16px;font-weight:500">指示</span></div>
<div class="a" style="left:948px;top:860px;width:57px;text-align:center;font:500 16px/18px 'Noto Serif CJK SC',serif">工序<br>指示</div>
<div class="a lnk" style="top:646px">图1!A1</div>
<div class="a lnk" style="top:710px">图2!A1</div>

<div class="a" style="left:1044px;top:539px;width:603px;height:33px;border:2px solid #1c1c3c;box-shadow:inset 0 0 0 1px #fff"></div>
<div class="a" style="left:1644px;top:569px;width:5px;height:5px;background:#1c1c3c;border:1px solid #fff"></div>

<!-- tabs -->
<div class="a" style="left:911px;top:901px;width:1009px;height:17px;background:#d4d0c8;border-top:1px solid #808080"></div>
<svg class="a" style="left:913px;top:903px" width="65" height="14" fill="#222"><path d="M3 3v8h1V3zM10 3l-5 4 5 4zM21 4l-4 3 4 3zM34 4l4 3-4 3zM46 3l5 4-5 4zM52 3v8h1V3z"/></svg>
<svg class="a" style="left:974px;top:901px" width="260" height="18" fill="none" stroke="#333"><path d="M4 1l6 15M57 16l6-15M88 16l6-15M118 16l6-15M149 16l6-15M180 16l6-15M210 16l6-15M238 16l6-15"/></svg>
<div class="a" style="left:983px;top:902px;font:13px/15px 'Liberation Mono',monospace;text-decoration:underline;letter-spacing:-.6px;color:#222">Sheet1</div>
<div class="a" style="left:1035px;top:901px;font:13px/15px 'Noto Sans CJK SC','Liberation Mono',sans-serif;color:#222"><span style="display:inline-block;width:30.800px">图1</span><span style="display:inline-block;width:30.800px">图2</span><span style="display:inline-block;width:30.800px">图3</span><span style="display:inline-block;width:30.800px">图4</span><span style="display:inline-block;width:30.800px">图5</span><span>图6</span></div>
<div class="a" style="left:1556px;top:902px;width:3px;height:14px;border:1px solid #888;background:#fff"></div>
<div class="a" style="left:1560px;top:902px;width:15px;height:14px;background:#d4d0c8;border:1px solid;border-color:#fff #444 #444 #fff"></div>
<svg class="a" style="left:1563px;top:905px" width="8" height="9"><path d="M6 0v8L1 4z" fill="#222"/></svg>
<div class="a" style="left:1576px;top:902px;width:248px;height:14px;background:#d4d0c8;border:1px solid;border-color:#fff #444 #444 #fff"></div>
<div class="a" style="left:1824px;top:902px;width:96px;height:14px;background:repeating-conic-gradient(#ccc 0 25%,#eee 0 50%) 0 0/2px 2px"></div>

<!-- status -->
<div class="a" style="left:908px;top:917px;width:1012px;height:2px;background:#eeece4"></div>
<div class="a" style="left:908px;top:919px;width:1012px;height:21px;background:#d4d0c8;border-bottom:2px solid #777"></div>
<div class="a" style="left:921px;top:921px;font:12px/16px 'Noto Sans CJK SC',sans-serif;color:#222">就绪</div>
<div class="a" style="left:1823px;top:921px;font:12.5px/17px 'Noto Sans CJK SC',sans-serif;color:#222">数字</div>
<svg class="a" style="left:1600px;top:920px" width="320" height="15" fill="none" stroke="#e8e6de"><rect x="4.500" y=".5" width="33" height="13"/><rect x="43.500" y=".5" width="110" height="13"/><rect x="158.500" y=".5" width="27" height="13"/><rect x="190.500" y=".5" width="27" height="13"/><rect x="254.500" y=".5" width="27" height="13"/><rect x="286.500" y=".5" width="27" height="13"/></svg>

<!-- coords -->
<div class="a" style="left:1761px;top:940px;width:159px;height:39px;background:#55cdb0;border-left:1px solid #a8e8d8;border-bottom:1px solid #a8e8d8;font:bold 13px/15px 'Liberation Mono',monospace;padding:3px 0 0 4px;letter-spacing:1.2px">X = 0.738914"<br>Y = 3.821729"</div>

<!-- bottom row -->
<div class="a" style="left:0;top:978px;width:1920px;height:71px;background:#000;clip-path:polygon(159px 0,1761px 0,1761px 3px,1920px 3px,1920px 71px,0 71px,0 0)"></div>
<div class="a" style="left:0;top:980px;width:5px;height:69px;background:#d4d4d4"></div>
<div class="a" style="left:5px;top:980px;width:31px;height:33px;background:#fdfccf;border:2px solid;border-color:#fff #777 #777 #fff"></div>
<div class="a" style="left:37px;top:980px;width:32px;height:33px;background:#fdfccf;border:2px solid;border-color:#fff #777 #777 #fff"></div>
<div class="a" style="left:70px;top:980px;width:29px;height:33px;background:#fdfccf;border:3px solid #55a892"></div>
<svg class="a" style="left:5px;top:980px" width="95" height="33" fill="none" stroke="#000"><rect x="8.500" y="9.500" width="16" height="16"/><path d="M10 11l13 14M18 25h5v-5"/><rect x="40.500" y="9.500" width="17" height="17"/><path d="M41 25L54 11M44 17h5M48 26l8-5" /><path d="M72.500 10.500l4-3h9v19h-13zM72.500 17.500h13M79.500 7.500v19"/></svg>
<div class="a" style="left:99px;top:980px;width:48px;height:33px;background:#fdfccf;font:bold 13px/33px 'Liberation Mono',monospace;padding-left:3px;word-spacing:-1px">X Y :</div>
<div class="a" style="left:148px;top:982px;width:171px;height:31px;background:#fdfccf;border:3px solid #c6c6a4"></div>
<div class="a" style="left:155px;top:985px;width:1px;height:16px;border-left:1px dotted #555"></div>
<div class="a" style="left:322px;top:980px;width:28px;height:33px;background:#fdfccf;border:3px solid #55a892"></div>
<div class="a" style="left:329px;top:987px;width:15px;height:19px;border:1px solid #000;font:bold 13px/17px 'Liberation Sans',sans-serif;text-align:center">!</div>
<div class="a" style="left:352px;top:981px;width:1491px;height:32px;background:#fdfccf;font:bold 11.7px/32px 'Liberation Mono',monospace;padding-left:4px">&lt;M1&gt; - Select first corner</div>
<div class="a" style="left:1845px;top:981px;width:75px;height:32px;background:#55cdb0"></div>
<div class="a" style="left:1851px;top:984px;width:69px;height:26px;background:#55cdb0;border:2px solid;border-color:#a8e8d8 #2c6f6f #2c6f6f #a8e8d8;font:15px/24px 'Liberation Serif',serif;padding-left:5px;-webkit-text-stroke:.3px #000">Inch</div>
<div class="a" style="left:1901px;top:995px;width:14px;height:6px;background:#9ddada;border-bottom:1px solid #2c6f6f"></div>

<!-- status bar -->
<div class="a" style="left:5px;top:1015px;width:1915px;height:25px;background:#b3ffff;border-top:2px solid #4a8f8c;border-bottom:2px solid #4a8f8c;border-left:2px solid #4a8f8c;box-shadow:inset 0 2px 0 #e0ffff"></div>
<div class="a" style="left:890px;top:1022px;font:bold 11.6px/16px 'Liberation Mono',monospace">DX=0.004,DY=0,D=0.004</div>
<div class="a" style="left:0;top:1042px;width:1920px;height:7px;background:#d4d4d4;border-bottom:2px solid #555;border-top:1px solid #000"></div>

<!-- bubble -->
<div class="a" style="left:1902px;top:995px;width:46px;height:46px;border-radius:50%;background:radial-gradient(circle at 40% 70%,#7ee07e,#3cae4c 70%);border:2px solid #dfe9df;box-shadow:0 0 2px #333"></div>
<div class="a" style="left:1906px;top:1011px;font:bold 12px/14px 'Liberation Sans',sans-serif;color:#fff">42</div>

</body>
</html>
